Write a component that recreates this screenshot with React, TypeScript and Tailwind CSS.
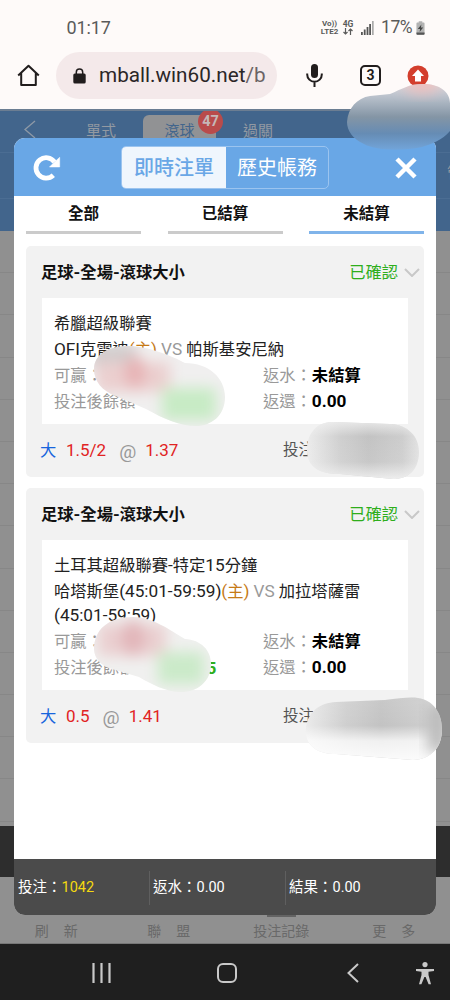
import React from 'react';
import clsx from 'clsx';

interface Bet {
  title: string;
  league: string;
  home: string;
  away: string;
  wrapAway?: string;
  balanceTail?: string;
  line: string;
  odds: string;
}

const bets: Bet[] = [
  {
    title: '足球-全場-滾球大小',
    league: '希臘超級聯賽',
    home: 'OFI克雷迪',
    away: '帕斯基安尼納',
    line: '1.5/2',
    odds: '1.37',
  },
  {
    title: '足球-全場-滾球大小',
    league: '土耳其超級聯賽-特定15分鐘',
    home: '哈塔斯堡(45:01-59:59)',
    away: '加拉塔薩雷',
    wrapAway: '(45:01-59:59)',
    balanceTail: '5',
    line: '0.5',
    odds: '1.41',
  },
];

// Latin runs are set slightly larger than the Chinese around them
const Mixed = ({ text }: { text: string }) => (
  <>
    {text.split(/([\x21-\x7e]+)/).map((part, i) =>
      i % 2 ? (
        <span key={i} className="text-[17.200px] leading-none">{part}</span>
      ) : (
        part
      )
    )}
  </>
);

const StatusBar = () => (
  <div className="flex h-[52px] shrink-0 items-center pt-[3px] text-[#5a5a5a]">
    <span className="ml-[66.500px] w-[253.500px] text-[18px] tracking-[-0.1px]">01:17</span>
    <div className="w-[19px] text-center text-[8px] font-bold leading-[7.5px]">
      <div>Vo))</div>
      <div>LTE2</div>
    </div>
    <div className="ml-[3px] flex w-[12px] flex-col items-center text-[8.500px] font-bold leading-[8px]">
      4G
      <svg width="10" height="7" viewBox="0 0 10 7" fill="none" stroke="currentColor" strokeWidth="1.2">
        <path d="M2.5 0v6M.5 4l2 2 2-2M7.5 7V1M5.5 3l2-2 2 2" />
      </svg>
    </div>
    <svg className="ml-[7px]" width="13" height="14" viewBox="0 0 13 14" fill="#555">
      <path d="M0 11h1.800v3H0zM2.800 8.500h1.800V14h-1.800zM5.600 6h1.800v8h-1.800zM8.200 3h1.800v11h-1.800z" />
      <path d="M11 0h1.700v14H11z" fill="#aaa" />
    </svg>
    <span className="ml-[7px] w-[34px] whitespace-nowrap text-[17.500px] tracking-[-0.4px]">17%</span>
    <svg className="ml-px" width="9" height="14" viewBox="0 0 10 15">
      <path d="M3 0h4v1.500h1.500a1 1 0 0 1 1 1V14a1 1 0 0 1-1 1h-7a1 1 0 0 1-1-1V2.500a1 1 0 0 1 1-1H3z" fill="#b2b2b2" />
      <path d="M.5 12.500h9V14a1 1 0 0 1-1 1h-7a1 1 0 0 1-1-1z" fill="#555" />
      <path d="M6 3.500 2 8.500h2.500L4 12l4-5H5.500z" fill="#444" />
    </svg>
  </div>
);

const BrowserBar = () => (
  <div className="flex h-[57px] shrink-0 items-start">
    <svg className="ml-[17px] mt-[12px]" width="23" height="23" viewBox="0 0 23 23" fill="none" stroke="#211d1d" strokeWidth="2">
      <path d="M1.200 11.500 11.500 1.800l10.300 9.700M4.200 9v12h14.600V9" strokeLinejoin="round" />
    </svg>
    <div className="ml-[16px] flex h-[47px] w-[221px] items-center rounded-full bg-[#f4e9ea]">
      <svg className="ml-[17px]" width="13" height="16" viewBox="0 0 13 16">
        <path d="M3.300 6V4.200a3.200 3.200 0 0 1 6.400 0V6" fill="none" stroke="#211d1d" strokeWidth="1.500" />
        <rect x=".3" y="5.500" width="12.400" height="10" rx="1.500" fill="#211d1d" />
      </svg>
      <span className="ml-[13px] pt-px text-[20.700px] text-[#2b2627]">
        mball.win60.net<span className="text-[#6b6365]">/b</span>
      </span>
    </div>
    <svg className="ml-[29px] mt-[11px]" width="17" height="25" viewBox="0 0 17 25" fill="none">
      <rect x="5" y="1" width="7" height="14" rx="3.500" fill="#211d1d" />
      <path d="M1.200 10.500v1a7.300 7.300 0 0 0 14.600 0v-1M8.500 19v5" stroke="#211d1d" strokeWidth="2" />
    </svg>
    <div className="ml-[37px] mt-[13px] flex h-[21px] w-[21px] items-center justify-center rounded-[5px] border-2 border-[#211d1d] text-[14px] font-bold text-[#211d1d]">
      3
    </div>
    <svg className="ml-[26px] mt-[13px]" width="22" height="22" viewBox="0 0 22 22">
      <circle cx="11" cy="11" r="10.500" fill="#d33e2d" />
      <path d="M11 4.500 5 11H8v5.500h6V11H17z" fill="#fff" />
    </svg>
  </div>
);

// Dimmed page that sits behind the modal
const Backdrop = () => (
  <div className="flex h-full flex-col bg-[#909090]">
    <div className="flex h-[122px] shrink-0 flex-col overflow-hidden border-t-2 border-[#6b7d92] bg-[#42658c]">
      <div className="flex h-[42px] shrink-0 items-start border-b border-[#4b6d93] text-[15px] text-[#9299a2]">
        <svg className="ml-[23px] mt-[9px]" width="13" height="19" viewBox="0 0 13 19" fill="none" stroke="#8e99a6" strokeWidth="1.300">
          <path d="M12 1 2 9.500 12 18" />
        </svg>
        <span className="ml-[50px] mt-[9px] leading-[22px]">單式</span>
        <div className="relative ml-[27px] mt-[4px] h-9 w-[73px] rounded-t-[6px] bg-[#919294] pt-[5px] text-center leading-[22px] text-[#42658c]">
          滾球
          <span className="absolute -right-[7px] -top-[6px] h-[25px] w-[25px] rounded-full bg-[#b94b4b] text-center text-[14.500px] font-bold leading-[25px] text-[#c5b7b7]">
            47
          </span>
        </div>
        <span className="ml-[27px] mt-[9px] leading-[22px]">過關</span>
      </div>
      <div className="h-[46px] shrink-0 border-b border-[#4b6d93] pl-[447px] pt-[9px] text-[15px] text-[#9299a2]">管</div>
    </div>
    {Array.from({ length: 14 }, (_, i) => (
      <div key={i} className="h-[42.200px] shrink-0 border-b border-[#878787]" />
    ))}
    <div className="mt-auto h-[51px] shrink-0 bg-[#2d2d2d]" />
    <div className="grid h-[67px] shrink-0 grid-cols-4 border-b border-[#777] text-center text-[14px] leading-[109px] text-[#696969]">
      <span>刷<span className="ml-[15px]">新</span></span>
      <span>聯<span className="ml-[15px]">盟</span></span>
      <span className="relative">
        投注記錄
        <i className="absolute left-[42px] top-[37px] h-[3px] w-[29px] bg-[#636363]" />
      </span>
      <span>更<span className="ml-[15px]">多</span></span>
    </div>
  </div>
);

const BetCard = ({ bet }: { bet: Bet }) => (
  <div className="rounded-[5px] bg-[#f2f2f2] px-4">
    <div className="flex h-[52px] items-center">
      <span className="-ml-px pt-0.5 font-bold text-[#111]"><Mixed text={bet.title} /></span>
      <span className="ml-auto pt-0.5 text-[#2eae1c]">已確認</span>
      <svg className="-mr-3 ml-[6px]" width="16" height="9" viewBox="0 0 16 9" fill="none" stroke="#c8c8c8" strokeWidth="2">
        <path d="m1 1 7 7 7-7" />
      </svg>
    </div>
    <div className="bg-white px-3 pb-[9px] pt-[13px] leading-[26px] text-[#222]">
      <div className="h-[26px] whitespace-nowrap"><Mixed text={bet.league} /></div>
      <div className="whitespace-nowrap py-px leading-6">
        <div className="h-6">
          <Mixed text={bet.home} />
          <span className="text-[#c67a16]"><Mixed text="(主)" /></span>
          <span className="text-[#999]"> <Mixed text="VS" /> </span>
          {bet.away}
        </div>
        {bet.wrapAway && <div className="h-6"><Mixed text={bet.wrapAway} /></div>}
      </div>
      <div className="grid h-[52px] grid-cols-[209px_1fr] grid-rows-2 whitespace-nowrap text-[#999]">
        <span>可贏：</span>
        <span>返水：<b className="text-black">未結算</b></span>
        <span className="flex">
          投注後餘額
          {bet.balanceTail && <b className="ml-[71px] text-[17.200px] text-[#2eae1c]">{bet.balanceTail}</b>}
        </span>
        <span>返還：<b className="text-black"><Mixed text="0.00" /></b></span>
      </div>
    </div>
    <div className="flex h-[53px] items-center pt-px text-[17px]">
      <span className="-ml-[2px] w-[26px] text-[16.300px] text-[#1765dd]">大</span>
      <span className="text-[#e12323]">{bet.line}</span>
      <span className="ml-[13px] mr-[9px] text-[19px] leading-none text-[#999]">@</span>
      <span className="text-[#e12323]">{bet.odds}</span>
      <span className="ml-auto w-[125px] text-[15.500px] text-[#555]">投注</span>
    </div>
  </div>
);

const Modal = () => (
  <div className="absolute left-[14px] top-[138px] flex h-[777px] w-[422px] flex-col overflow-hidden rounded-[11px] bg-white">
    <div className="flex h-[58px] shrink-0 items-center bg-[#69a7e6]">
      <svg className="ml-[19px] mt-[1px]" width="28" height="28" viewBox="0 0 28 28" fill="none">
        <path d="M20.300 21.200A10.200 10.200 0 1 1 21.500 8" stroke="#fff" strokeWidth="4.800" />
        <path d="M26.700 3.300V13H16.500L20 9.500z" fill="#fff" stroke="#fff" strokeWidth=".5" />
      </svg>
      <div className="ml-[60px] flex h-[43px] w-[208px] overflow-hidden rounded-[5px] border border-[#9bc4ef] text-[20px]">
        <span className="flex w-[104px] items-center justify-center bg-[#eff6fd] pt-px font-medium text-[#69a7e6]">即時注單</span>
        <span className="flex flex-1 items-center justify-center pt-px text-white">歷史帳務</span>
      </div>
      <svg className="ml-[66px] mt-0.5" width="22" height="22" viewBox="0 0 22 22" stroke="#fff" strokeWidth="4.500">
        <path d="m2 2 18 18M20 2 2 20" />
      </svg>
    </div>
    <div className="flex shrink-0 justify-between px-3 text-[15.500px] font-bold text-[#111]">
      {['全部', '已結算', '未結算'].map((tab, i) => (
        <div
          key={tab}
          className={clsx(
            'h-[38px] w-[115px] border-b-[3px] text-center leading-[37px]',
            i === 2 ? 'border-[#80b4ea]' : 'border-[#cbcbcb]'
          )}
        >
          {tab}
        </div>
      ))}
    </div>
    <div className="flex grow flex-col gap-[11px] px-3 pt-3 text-[16.300px]">
      {bets.map((bet) => (
        <BetCard key={bet.league} bet={bet} />
      ))}
    </div>
    <div className="flex h-14 shrink-0 items-center bg-[#4b4b4b] pt-0.5 text-[14.500px] text-white">
      <div className="w-[135px] pl-1">投注：<span className="text-[#f5d90f]">1042</span></div>
      <div className="h-[34px] w-[136px] border-l border-[#5f5f5f] pl-[3px] leading-[34px]">返水：0.00</div>
      <div className="h-[34px] border-l border-[#5f5f5f] pl-[3px] leading-[34px]">結果：0.00</div>
    </div>
  </div>
);

// Brushed-out patches covering the private values
const Smudges = () => (
  <svg className="pointer-events-none absolute inset-0" width="450" height="1000" viewBox="0 0 450 1000">
    <defs>
      <filter id="soft" x="-50%" y="-50%" width="200%" height="200%">
        <feGaussianBlur stdDeviation="7" />
      </filter>
      <linearGradient id="top" x1="0" y1="0" x2="0" y2="1">
        <stop offset="0" stopColor="#d9d9df" />
        <stop offset=".22" stopColor="#b4bdc8" />
        <stop offset=".5" stopColor="#8495a5" />
        <stop offset=".75" stopColor="#668cb4" />
        <stop offset="1" stopColor="#72a5da" />
      </linearGradient>
      <linearGradient id="grayH">
        <stop offset="0" stopColor="#ececec" />
        <stop offset=".3" stopColor="#cfcfcf" />
        <stop offset=".55" stopColor="#c3c3c3" />
        <stop offset=".85" stopColor="#cdcdcd" />
        <stop offset="1" stopColor="#e2e2e2" />
      </linearGradient>
      <linearGradient id="fadeV" x1="0" y1="0" x2="0" y2="1">
        <stop offset="0" stopColor="#f2f2f2" stopOpacity=".75" />
        <stop offset=".25" stopColor="#f2f2f2" stopOpacity="0" />
        <stop offset=".7" stopColor="#f2f2f2" stopOpacity=".1" />
        <stop offset="1" stopColor="#f2f2f2" stopOpacity=".9" />
      </linearGradient>
      <linearGradient id="fadeW" x1="0" y1="0" x2="0" y2="1">
        <stop offset="0" stopColor="#fff" stopOpacity=".1" />
        <stop offset=".45" stopColor="#fff" stopOpacity="0" />
        <stop offset=".68" stopColor="#fff" stopOpacity=".75" />
        <stop offset="1" stopColor="#fff" stopOpacity=".95" />
      </linearGradient>
      <clipPath id="clipTop">
        <path d="M347 122C348 108 357 98 370 96L390 94C402 89 409 84 423 84C440 84 450 92 450 103V131C442 140 432 144 422 147C402 151 377 151 364 144C353 139 347 131 347 122Z" />
      </clipPath>
      <clipPath id="clip1">
        <path d="M94 369C94 355 108 346 128 346C148 346 172 356 185 363C209 363 225 378 225 397C225 416 211 426 196 426C180 426 164 419 146 409L116 396C102 391 94 381 94 369Z" />
      </clipPath>
      <clipPath id="clip2">
        <path d="M94 649C94 630 108 617 133 617C152 617 170 630 185 639C201 640 211 650 211 664C211 682 197 692 181 692C166 692 151 684 139 677L112 669C101 666 94 658 94 649Z" />
      </clipPath>
      <clipPath id="clip4">
        <path d="M306 728C308 711 320 703 336 702L385 700C400 698 411 697 418 698C433 700 442 713 442 729C442 748 431 759 413 760L336 754C316 754 304 744 306 728Z" />
      </clipPath>
    </defs>

    <g clipPath="url(#clipTop)">
      <rect x="340" y="84" width="110" height="66" fill="url(#top)" />
      <ellipse cx="422" cy="84" rx="18" ry="9" fill="#f0bcb9" filter="url(#soft)" />
    </g>

    <g clipPath="url(#clip1)">
      <rect x="90" y="340" width="140" height="90" fill="#f0efef" />
      <g filter="url(#soft)">
        <rect x="90" y="344" width="46" height="24" fill="#d0cccc" />
        <rect x="96" y="362" width="74" height="30" fill="#ebcfcf" />
        <ellipse cx="135" cy="372" rx="11" ry="16" fill="#e7b3b5" />
        <rect x="162" y="388" width="54" height="32" fill="#c7ebc5" />
      </g>
    </g>
    <g clipPath="url(#clip2)">
      <rect x="90" y="612" width="130" height="84" fill="#f0f0ef" />
      <g filter="url(#soft)">
        <rect x="98" y="624" width="68" height="32" fill="#eacfd0" />
        <ellipse cx="133" cy="638" rx="12" ry="18" fill="#e2b6ba" />
        <rect x="158" y="652" width="46" height="32" fill="#cbeac9" />
      </g>
    </g>

    <path d="M307 450C307 432 318 422 333 422L390 424C408 425 419 436 419 452C419 469 409 479 393 479L340 474C318 474 307 466 307 450Z" fill="url(#grayH)" />
    <path d="M307 450C307 432 318 422 333 422L390 424C408 425 419 436 419 452C419 469 409 479 393 479L340 474C318 474 307 466 307 450Z" fill="url(#fadeV)" />

    <g clipPath="url(#clip4)">
      <rect x="304" y="696" width="140" height="66" fill="url(#grayH)" />
      <rect x="304" y="696" width="140" height="66" fill="url(#fadeW)" />
      <rect x="428" y="704" width="18" height="48" fill="#b9b9b9" filter="url(#soft)" />
    </g>
  </svg>
);

const SystemNav = () => (
  <div className="flex h-14 shrink-0 items-center pt-0.5 bg-[#1f1f1f] text-[#c9c9c9]">
    <svg className="ml-[92px]" width="19" height="20" viewBox="0 0 19 20" stroke="currentColor" strokeWidth="2.200">
      <path d="M1.500 0v20M9.500 0v20M17.500 0v20" />
    </svg>
    <svg className="ml-[106px]" width="20" height="20" viewBox="0 0 20 20" fill="none" stroke="currentColor" strokeWidth="2">
      <rect x="1" y="1" width="18" height="18" rx="5" />
    </svg>
    <svg className="ml-[110px]" width="12" height="20" viewBox="0 0 12 20" fill="none" stroke="currentColor" strokeWidth="2">
      <path d="M11 1 1.500 10 11 19" />
    </svg>
    <svg className="ml-[57px]" width="18" height="23" viewBox="0 0 18 23" fill="currentColor">
      <circle cx="9" cy="2.600" r="2.600" />
      <path d="M0 7h18v2l-5.500.8V13L15 22.300h-2.400L9.600 15H8.400l-3 7.300H3L5.500 13V9.800L0 9z" />
    </svg>
  </div>
);

export default function App() {
  return (
    <div className="relative flex h-[1000px] w-[450px] flex-col overflow-hidden bg-[#fefaf9] font-[Roboto,'Noto_Sans_CJK_TC',sans-serif]">
      <StatusBar />
      <BrowserBar />
      <div className="h-[835px] shrink-0">
        <Backdrop />
      </div>
      <SystemNav />
      <Modal />
      <Smudges />
    </div>
  );
}
